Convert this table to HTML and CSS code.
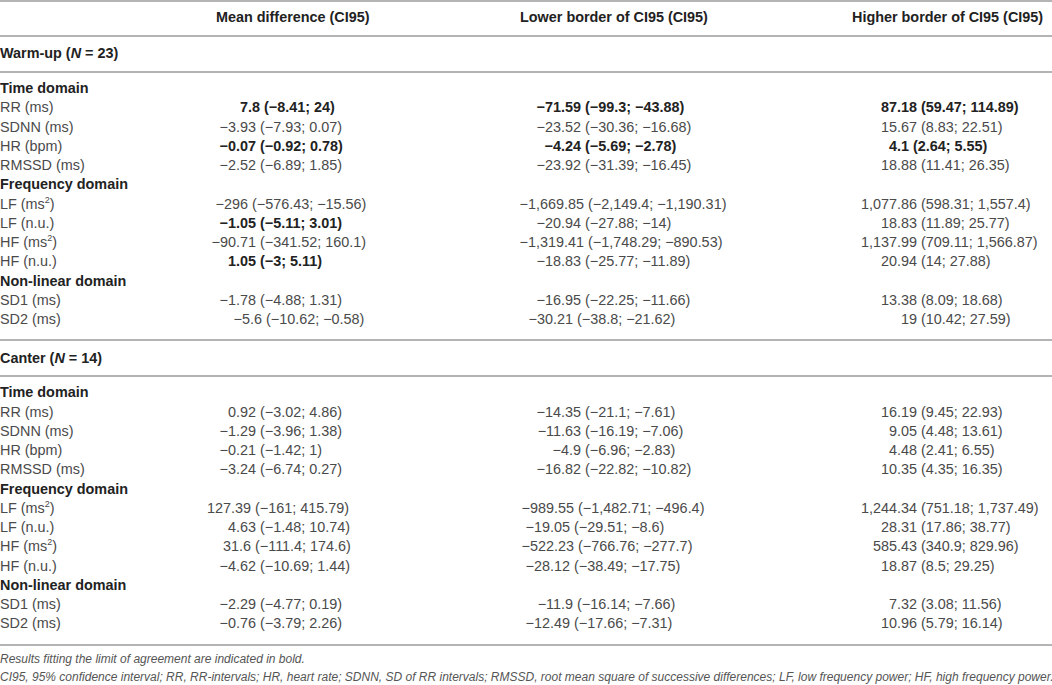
FILE: index.html
```html
<!DOCTYPE html>
<html lang="en">
<head>
  <meta charset="UTF-8">
  <title>Limits of agreement</title>
  <link rel="stylesheet" href="styles.css">
</head>
<body>
  <table class="hrv">
    <colgroup>
      <col class="c0"><col class="c1"><col class="c2"><col class="c3">
    </colgroup>
    <thead>
      <tr>
        <th></th>
        <th class="h1">Mean difference (CI95)</th>
        <th class="h2">Lower border of CI95 (CI95)</th>
        <th class="h3">Higher border of CI95 (CI95)</th>
      </tr>
    </thead>

    <!-- Warm-up -->
    <tbody>
      <tr class="grp"><td colspan="4">Warm-up (<i>N</i> = 23)</td></tr>
      <tr class="dom top"><td colspan="4">Time domain</td></tr>
      <tr class="b"><td>RR (ms)</td><td class="r12"><span class="n">7</span>.8 (−8.41; 24)</td><td><span class="n">−71</span>.59 (−99.3; −43.88)</td><td><span class="n">87</span>.18 (59.47; 114.89)</td></tr>
      <tr><td>SDNN (ms)</td><td><span class="n">−3</span>.93 (−7.93; 0.07)</td><td><span class="n">−23</span>.52 (−30.36; −16.68)</td><td><span class="n">15</span>.67 (8.83; 22.51)</td></tr>
      <tr class="b"><td>HR (bpm)</td><td><span class="n">−0</span>.07 (−0.92; 0.78)</td><td><span class="n">−4</span>.24 (−5.69; −2.78)</td><td><span class="n">4</span>.1 (2.64; 5.55)</td></tr>
      <tr><td>RMSSD (ms)</td><td><span class="n">−2</span>.52 (−6.89; 1.85)</td><td><span class="n">−23</span>.92 (−31.39; −16.45)</td><td><span class="n">18</span>.88 (11.41; 26.35)</td></tr>
      <tr class="dom"><td colspan="4">Frequency domain</td></tr>
      <tr><td>LF (ms<sup>2</sup>)</td><td class="r12"><span class="n">−296</span> (−576.43; −15.56)</td><td class="r3"><span class="n">−1,669</span>.85 (−2,149.4; −1,190.31)</td><td><span class="n">1,077</span>.86 (598.31; 1,557.4)</td></tr>
      <tr><td>LF (n.u.)</td><td class="b"><span class="n">−1</span>.05 (−5.11; 3.01)</td><td><span class="n">−20</span>.94 (−27.88; −14)</td><td><span class="n">18</span>.83 (11.89; 25.77)</td></tr>
      <tr><td>HF (ms<sup>2</sup>)</td><td><span class="n">−90</span>.71 (−341.52; 160.1)</td><td class="r3"><span class="n">−1,319</span>.41 (−1,748.29; −890.53)</td><td><span class="n">1,137</span>.99 (709.11; 1,566.87)</td></tr>
      <tr><td>HF (n.u.)</td><td class="b"><span class="n">1</span>.05 (−3; 5.11)</td><td><span class="n">−18</span>.83 (−25.77; −11.89)</td><td><span class="n">20</span>.94 (14; 27.88)</td></tr>
      <tr class="dom"><td colspan="4">Non-linear domain</td></tr>
      <tr><td>SD1 (ms)</td><td><span class="n">−1</span>.78 (−4.88; 1.31)</td><td><span class="n">−16</span>.95 (−22.25; −11.66)</td><td><span class="n">13</span>.38 (8.09; 18.68)</td></tr>
      <tr class="end"><td>SD2 (ms)</td><td class="r14"><span class="n">−5</span>.6 (−10.62; −0.58)</td><td class="l8"><span class="n">−30</span>.21 (−38.8; −21.62)</td><td class="r20"><span class="n">19</span> (10.42; 27.59)</td></tr>
    </tbody>

    <!-- Canter -->
    <tbody>
      <tr class="grp"><td colspan="4">Canter (<i>N</i> = 14)</td></tr>
      <tr class="dom top"><td colspan="4">Time domain</td></tr>
      <tr><td>RR (ms)</td><td><span class="n">0</span>.92 (−3.02; 4.86)</td><td><span class="n">−14</span>.35 (−21.1; −7.61)</td><td><span class="n">16</span>.19 (9.45; 22.93)</td></tr>
      <tr><td>SDNN (ms)</td><td><span class="n">−1</span>.29 (−3.96; 1.38)</td><td><span class="n">−11</span>.63 (−16.19; −7.06)</td><td><span class="n">9</span>.05 (4.48; 13.61)</td></tr>
      <tr><td>HR (bpm)</td><td><span class="n">−0</span>.21 (−1.42; 1)</td><td class="r8"><span class="n">−4</span>.9 (−6.96; −2.83)</td><td><span class="n">4</span>.48 (2.41; 6.55)</td></tr>
      <tr><td>RMSSD (ms)</td><td><span class="n">−3</span>.24 (−6.74; 0.27)</td><td><span class="n">−16</span>.82 (−22.82; −10.82)</td><td><span class="n">10</span>.35 (4.35; 16.35)</td></tr>
      <tr class="dom"><td colspan="4">Frequency domain</td></tr>
      <tr><td>LF (ms<sup>2</sup>)</td><td class="l5"><span class="n">127</span>.39 (−161; 415.79)</td><td class="l7"><span class="n">−989</span>.55 (−1,482.71; −496.4)</td><td><span class="n">1,244</span>.34 (751.18; 1,737.49)</td></tr>
      <tr><td>LF (n.u.)</td><td><span class="n">4</span>.63 (−1.48; 10.74)</td><td class="l11"><span class="n">−19</span>.05 (−29.51; −8.6)</td><td><span class="n">28</span>.31 (17.86; 38.77)</td></tr>
      <tr><td>HF (ms<sup>2</sup>)</td><td class="r3"><span class="n">31</span>.6 (−111.4; 174.6)</td><td class="l7"><span class="n">−522</span>.23 (−766.76; −277.7)</td><td><span class="n">585</span>.43 (340.9; 829.96)</td></tr>
      <tr><td>HF (n.u.)</td><td><span class="n">−4</span>.62 (−10.69; 1.44)</td><td class="l11"><span class="n">−28</span>.12 (−38.49; −17.75)</td><td><span class="n">18</span>.87 (8.5; 29.25)</td></tr>
      <tr class="dom"><td colspan="4">Non-linear domain</td></tr>
      <tr><td>SD1 (ms)</td><td><span class="n">−2</span>.29 (−4.77; 0.19)</td><td><span class="n">−11</span>.9 (−16.14; −7.66)</td><td><span class="n">7</span>.32 (3.08; 11.56)</td></tr>
      <tr class="end"><td>SD2 (ms)</td><td><span class="n">−0</span>.76 (−3.79; 2.26)</td><td class="l11"><span class="n">−12</span>.49 (−17.66; −7.31)</td><td><span class="n">10</span>.96 (5.79; 16.14)</td></tr>
    </tbody>
  </table>

  <div class="notes">
    <p>Results fitting the limit of agreement are indicated in bold.</p>
    <p>CI95, 95% confidence interval; RR, RR-intervals; HR, heart rate; SDNN, SD of RR intervals; RMSSD, root mean square of successive differences; LF, low frequency power; HF, high frequency power.</p>
  </div>
</body>
</html>
```

FILE: styles.css
```css
body {
    margin: 0;
    background: #fff;
    color: #4a4a4a;
    font-family: "Liberation Sans", Arial, sans-serif;
}

.hrv {
    width: 1052px;
    border-collapse: collapse;
    font-size: 14.4px;
    border-top: 2px solid #b4b4b4;
    border-bottom: 2px solid #b4b4b4;
}

.c0 { width: 200px; }
.c1 { width: 300px; }
.c2 { width: 340px; }
.c3 { width: 212px; }

/* header row */
.hrv th {
    height: 30px;
    padding: 0 0 3px;
    text-align: left;
    font-weight: bold;
    color: #222;
    border-bottom: 2px solid #b4b4b4;
}
.hrv .h1 { padding-left: 16px; }
.hrv .h2 { padding-left: 20px; }
.hrv .h3 { padding-left: 12px; }

.hrv td {
    padding: 0;
    line-height: 19.25px;
    white-space: nowrap;
    vertical-align: top;
}

/* decimal alignment: integer part in a fixed right-aligned box */
.n {
    display: inline-block;
    text-align: right;
}
.hrv td:nth-child(2) .n { width: 36px; }
.hrv td:nth-child(3) .n { width: 61px; }
.hrv td:nth-child(4) .n { width: 57px; }

/* hand nudges where the source breaks its own alignment */
.r3 .n { margin-left: 3px; }
.r8 .n { margin-left: 8px; }
.r12 .n { margin-left: 12px; }
.r14 .n { margin-left: 14px; }
.r20 .n { margin-left: 20px; }
.l5 .n { margin-left: -5px; }
.l7 .n { margin-left: -7px; }
.l8 .n { margin-left: -8px; }
.l11 .n { margin-left: -11px; }

.hrv sup {
    font-size: 9px;
    line-height: 0;
}

/* group (warm-up / canter) rows */
.hrv .grp td {
    height: 34px;
    vertical-align: middle;
    font-weight: bold;
    color: #222;
    border-bottom: 2px solid #b4b4b4;
}
.hrv tbody + tbody .grp td { border-top: 2px solid #b4b4b4; }

.hrv .dom td {
    font-weight: bold;
    color: #222;
}
.hrv .top td { padding-top: 6px; }
.hrv .end td { padding-bottom: 10px; }

.hrv tr.b td:not(:first-child),
.hrv td.b {
    font-weight: bold;
    color: #222;
}

.notes {
    padding-top: 4px;
    font-size: 12px;
    font-style: italic;
    color: #555;
}
.notes p {
    margin: 0;
    line-height: 18px;
    white-space: nowrap;
}
```
